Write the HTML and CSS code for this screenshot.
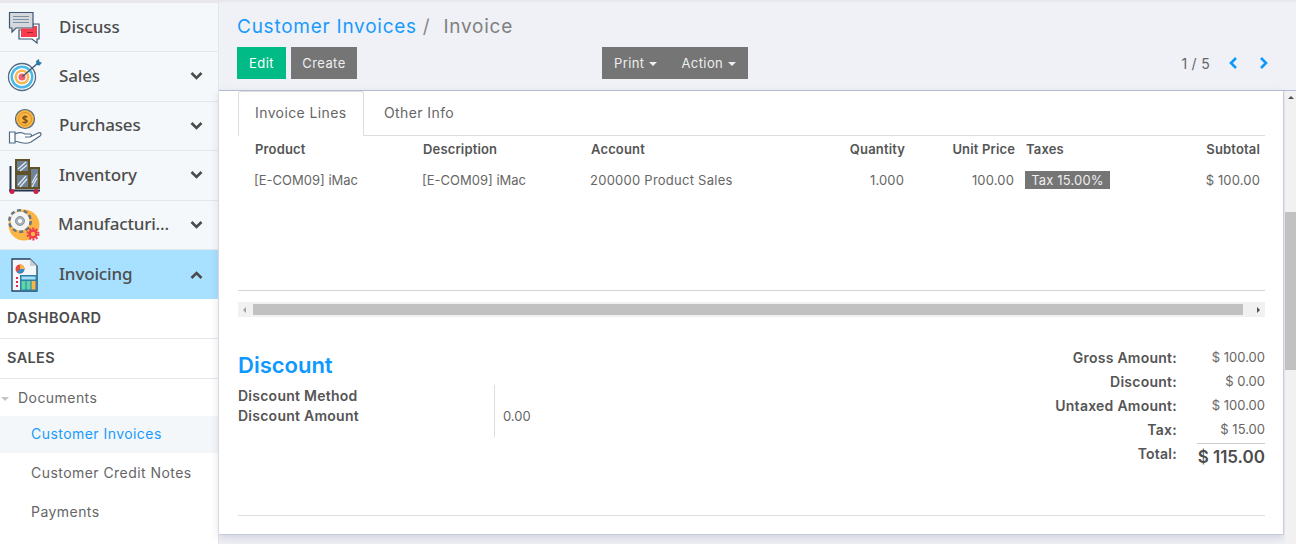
FILE: index.html
```html
<!DOCTYPE html>
<html lang="en">
<head>
    <meta charset="UTF-8">
    <title>Customer Invoices / Invoice</title>
    <link rel="stylesheet" href="styles.css">
</head>
<body>
<div class="app">

<!-- Left menu -->
<nav class="sidebar">
    <div class="app-item">
        <svg class="app-icon" viewBox="0 0 40 40">
            <path d="M27 17h6v15h-2v4l-5-4H13v-9h14z" fill="#fff" stroke="#3d5672" stroke-width="1.200"/>
            <path d="M3.500 5.500H27V21H10l-4 4v-4H3.500z" fill="#d5d9de" stroke="#3d5672" stroke-width="1.200"/>
            <path d="M7 9.500h16M7 12.500h16M7 15.500h16" stroke="#7d8fa3" stroke-width="1.200"/>
            <path d="M15 21.500h12.500V19H31v11H15z" fill="#fb3b4e"/>
            <path d="M21 25.500h6" stroke="#a3202c"/>
        </svg>
        <span class="app-name app-name-first">Discuss</span>
    </div>
    <div class="app-item">
        <svg class="app-icon" viewBox="0 0 40 40">
            <circle cx="16" cy="21" r="13.500" fill="#fff" stroke="#4f6a84" stroke-width="1.300"/>
            <circle cx="16" cy="21" r="11.500" fill="#4cb8e8"/>
            <circle cx="16" cy="21" r="9" fill="#fff"/>
            <circle cx="16" cy="21" r="7.500" fill="#f9b754"/>
            <circle cx="16" cy="21" r="5" fill="#fff"/>
            <circle cx="16" cy="21" r="3.500" fill="#ef5f6e"/>
            <path d="M16.500 20.500L32 7" stroke="#3d5672" stroke-width="1.300"/>
            <path d="M30 5l3-2 .5 3 2.500.5-2.500 3-3-.5z" fill="#2a7aa8"/>
        </svg>
        <span class="app-name">Sales</span>
        <svg class="chevron" viewBox="0 0 14 10"><path d="M2 2l5 5 5-5" fill="none" stroke="#4a4a4a" stroke-width="2.600"/></svg>
    </div>
    <div class="app-item">
        <svg class="app-icon" viewBox="0 0 40 40">
            <circle cx="19" cy="13" r="9.500" fill="#fbb544" stroke="#4f6a84" stroke-width="1.200"/>
            <circle cx="19" cy="13" r="6.500" fill="none" stroke="#c98a22" stroke-width=".8"/>
            <text class="coin" x="19" y="17" text-anchor="middle">$</text>
            <path d="M3.500 26h5.500v11h-5.500zM9 28c4-2 7-2 10 0h5c2 0 2 3 0 3h-5m5 0l8-4c3-1 4 1 2 3l-9 6c-4 2-10 1-14-.5H9" fill="#fff" stroke="#4f6a84" stroke-width="1.200"/>
        </svg>
        <span class="app-name">Purchases</span>
        <svg class="chevron" viewBox="0 0 14 10"><path d="M2 2l5 5 5-5" fill="none" stroke="#4a4a4a" stroke-width="2.600"/></svg>
    </div>
    <div class="app-item">
        <svg class="app-icon" viewBox="0 0 40 40">
            <path d="M4.500 11v25M3 35.500h31" stroke="#22344a" stroke-width="2"/>
            <rect x="10" y="5" width="13" height="12" fill="#6f8297" stroke="#5f5226" stroke-width="2"/>
            <rect x="10" y="19" width="13" height="14" fill="#6f8297" stroke="#5f5226" stroke-width="2"/>
            <rect x="24" y="13" width="9" height="20" fill="#6f8297" stroke="#5f5226" stroke-width="2"/>
            <path d="M12 14l8-7M14 16l7-6M12 30l8-9M14 32l7-8M26 28l5-9M26 32l5-9" stroke="#e3ebf2" stroke-width="1.300"/>
            <circle cx="6" cy="36.500" r="2.500" fill="#c91f4b"/>
            <circle cx="30" cy="36.500" r="2.500" fill="#c91f4b"/>
        </svg>
        <span class="app-name">Inventory</span>
        <svg class="chevron" viewBox="0 0 14 10"><path d="M2 2l5 5 5-5" fill="none" stroke="#4a4a4a" stroke-width="2.600"/></svg>
    </div>
    <div class="app-item">
        <svg class="app-icon" viewBox="0 0 40 40">
            <circle cx="18" cy="20" r="15.500" fill="#fbb544"/>
            <circle cx="14" cy="16" r="10.500" fill="none" stroke="#6b7680" stroke-width="3" stroke-dasharray="4 2.600"/>
            <circle cx="14" cy="16" r="9.500" fill="#f4f5f6"/>
            <circle cx="14" cy="16" r="4.500" fill="#aab1b8" stroke="#8b949c"/>
            <circle cx="14" cy="16" r="2" fill="#fff"/>
            <circle cx="27" cy="29" r="3.500" fill="none" stroke="#ee3b4c" stroke-width="2.500"/>
            <circle cx="27" cy="29" r="5.500" fill="none" stroke="#ee3b4c" stroke-width="2" stroke-dasharray="2 1.500"/>
        </svg>
        <span class="app-name app-name-tight">Manufacturi...</span>
        <svg class="chevron" viewBox="0 0 14 10"><path d="M2 2l5 5 5-5" fill="none" stroke="#4a4a4a" stroke-width="2.600"/></svg>
    </div>
    <div class="app-item app-item-open">
        <svg class="app-icon" viewBox="0 0 40 40">
            <path d="M6 4h18l7 7v25H6z" fill="#f4f7fa" stroke="#27405a" stroke-width="1.300"/>
            <path d="M24 4l7 7h-7z" fill="#c7ced6"/>
            <circle cx="14" cy="14" r="4.500" fill="#e8473f"/>
            <path d="M14 14v-4.500a4.500 4.500 0 0 1 4.500 4.500z" fill="#fbb544"/>
            <path d="M14 14h4.500a4.500 4.500 0 0 1-7.500 3.300z" fill="#2a8fd0"/>
            <path d="M10 23h2M10 27h2M10 31h2" stroke="#e2285a" stroke-width="2"/>
            <rect x="14" y="20" width="17" height="16" fill="#2d7ea8"/>
            <rect x="15.500" y="21.500" width="14" height="3" fill="#a6e0f7"/>
            <rect x="15.500" y="26" width="4" height="8.500" fill="#5ed6a8"/>
            <rect x="20.500" y="26" width="4" height="8.500" fill="#5ed6a8"/>
            <rect x="25.500" y="26" width="4" height="8.500" fill="#fbb544"/>
        </svg>
        <span class="app-name">Invoicing</span>
        <svg class="chevron" viewBox="0 0 14 10"><path d="M2 8l5-5 5 5" fill="none" stroke="#4a4a4a" stroke-width="2.600"/></svg>
    </div>

    <div class="menu-head">DASHBOARD</div>
    <div class="menu-head">SALES</div>
    <div class="menu-group"><span class="caret caret-light"></span>Documents</div>
    <div class="menu-link menu-link-active">Customer Invoices</div>
    <div class="menu-link">Customer Credit Notes</div>
    <div class="menu-link">Payments</div>
</nav>

<main class="content">

    <!-- Breadcrumb and buttons -->
    <header class="control-panel">
        <div class="breadcrumb"><span class="crumb-link">Customer Invoices</span><span class="crumb-sep">/</span><span class="crumb-current">Invoice</span></div>
        <div class="toolbar">
            <div class="btn-set">
                <button class="btn btn-primary">Edit</button>
                <button class="btn btn-create">Create</button>
            </div>
            <div class="btn-group">
                <button class="btn">Print<span class="caret"></span></button>
                <button class="btn">Action<span class="caret"></span></button>
            </div>
            <div class="pager">
                <span class="pager-count">1 / 5</span>
                <svg class="pager-arrow" viewBox="0 0 10 14"><path d="M8 2L3 7l5 5" fill="none" stroke="#0d99ff" stroke-width="2.600"/></svg>
                <svg class="pager-arrow" viewBox="0 0 10 14"><path d="M2 2l5 5-5 5" fill="none" stroke="#0d99ff" stroke-width="2.600"/></svg>
            </div>
        </div>
    </header>

    <div class="view">
        <section class="sheet">
            <div class="tabs">
                <div class="tab tab-active">Invoice Lines</div>
                <div class="tab">Other Info</div>
            </div>

            <div class="lines lines-head">
                <div>Product</div>
                <div>Description</div>
                <div>Account</div>
                <div class="num">Quantity</div>
                <div class="num">Unit Price</div>
                <div class="taxes">Taxes</div>
                <div class="num">Subtotal</div>
            </div>
            <div class="lines lines-row">
                <div class="product">[E-COM09] iMac</div>
                <div class="product">[E-COM09] iMac</div>
                <div class="account">200000 Product Sales</div>
                <div class="num">1.000</div>
                <div class="num">100.00</div>
                <div class="taxes"><span class="tag">Tax 15.00%</span></div>
                <div class="num">$ 100.00</div>
            </div>

            <div class="hscroll">
                <span class="arrow arrow-left"></span>
                <div class="hscroll-thumb"></div>
                <span class="arrow arrow-right"></span>
            </div>

            <div class="footer-row">
                <div class="discount">
                    <h2>Discount</h2>
                    <div class="discount-grid">
                        <div class="discount-labels">
                            <div>Discount Method</div>
                            <div>Discount Amount</div>
                        </div>
                        <div class="discount-values">
                            <div>&nbsp;</div>
                            <div>0.00</div>
                        </div>
                    </div>
                </div>
                <div class="totals">
                    <div class="total-label">Gross Amount:</div><div class="total-value">$ 100.00</div>
                    <div class="total-label">Discount:</div><div class="total-value">$ 0.00</div>
                    <div class="total-label">Untaxed Amount:</div><div class="total-value">$ 100.00</div>
                    <div class="total-label">Tax:</div><div class="total-value">$ 15.00</div>
                    <div class="total-label">Total:</div><div class="total-value grand">$ 115.00</div>
                </div>
            </div>
        </section>

        <div class="vscroll">
            <span class="arrow arrow-up"></span>
            <div class="vscroll-thumb"></div>
        </div>
    </div>
</main>

</div>
</body>
</html>
```

FILE: styles.css
```css
* {
    box-sizing: border-box;
}

body {
    margin: 0;
    font-family: Inter, sans-serif;
    font-size: 13px;
    color: #666;
}

.app {
    display: flex;
    height: 544px;
    overflow: hidden;
}

/* sidebar */
.sidebar {
    width: 219px;
    flex: none;
    background: #fff;
    border-right: 1px solid #e6e6ea;
    padding-top: 2.500px;
    box-shadow: inset 0 3px 0 #e8e8ec;
}

.app-item {
    height: 49.500px;
    display: flex;
    align-items: center;
    padding-left: 6px;
    padding-right: 14px;
    background: #f5f8fa;
    border-bottom: 1px solid #e3e6ea;
}

.app-item-open {
    background: #a8e0ff;
    border-bottom: 0;
    height: 49px;
}

.app-icon {
    width: 40px;
    height: 40px;
    flex: none;
}

.coin {
    font-family: "Open Sans", sans-serif;
    font-size: 11px;
    font-weight: 700;
    fill: #7a4d10;
}

.app-name {
    margin-left: 13px;
    margin-bottom: 2px;
    font-family: "Noto Sans", sans-serif;
    font-size: 17px;
    font-weight: 500;
    letter-spacing: -.15px;
    color: #4d4d4d;
    flex: 1;
    white-space: nowrap;
}

.app-name-first {
    margin-bottom: 0;
    letter-spacing: 0;
}

.app-name-tight {
    margin-left: 12px;
    letter-spacing: -.2px;
}

.chevron {
    width: 15px;
    height: 10px;
    flex: none;
}

.menu-head {
    height: 40px;
    padding-left: 7px;
    line-height: 38px;
    font-size: 14.500px;
    letter-spacing: .35px;
    font-weight: 600;
    color: #4c4c4c;
    border-bottom: 1px solid #e6e6ea;
}

.menu-group {
    height: 37px;
    line-height: 37px;
    padding-left: 1px;
    font-size: 14px;
    letter-spacing: .45px;
    color: #666;
}

.caret-light {
    border-top-color: #c4c4c4 !important;
    margin: 0 9px 0 0 !important;
}

.menu-link {
    height: 39px;
    line-height: 40px;
    padding-left: 31px;
    font-size: 14px;
    letter-spacing: .45px;
    color: #666;
}

.menu-link-active {
    height: 37px;
    line-height: 36px;
    color: #1a9bfc;
    background: #f3f7f9;
}

/* main area */
.content {
    flex: 1;
    display: flex;
    flex-direction: column;
    background: #eff1f6;
    min-width: 0;
}

.control-panel {
    height: 91px;
    flex: none;
    padding: 14px 18px 0 18px;
    border-bottom: 1px solid #b3bfd2;
    box-shadow: inset 0 2px 0 #e8e8ec;
}

.breadcrumb {
    height: 33px;
    font-size: 19px;
    letter-spacing: .75px;
    line-height: 26px;
}

.crumb-link {
    color: #1a9bfc;
}

.crumb-sep {
    color: #888;
    margin: 0 13px 0 6px;
}

.crumb-current {
    color: #808080;
}

.toolbar {
    display: flex;
    align-items: center;
}

.btn-set {
    display: flex;
    gap: 5px;
    width: 365px;
}

.btn-group {
    display: flex;
}

.btn {
    height: 32px;
    border: 0;
    padding: 0 12px;
    font-family: Inter, sans-serif;
    font-size: 13px;
    letter-spacing: .4px;
    color: #eee;
    background: #757575;
}

.btn-primary {
    background: #00bb85;
    color: #fff;
    width: 49px;
    padding: 0;
}

.btn-create {
    width: 66px;
    padding: 0;
}

.caret {
    display: inline-block;
    border-left: 4px solid transparent;
    border-right: 4px solid transparent;
    border-top: 4px solid #eee;
    margin-left: 5px;
    vertical-align: middle;
}

.pager {
    margin-left: auto;
    display: flex;
    align-items: center;
    padding-right: 9px;
}

.pager-count {
    color: #666;
    font-size: 14px;
    letter-spacing: .3px;
    margin-right: 18px;
}

.pager-arrow {
    width: 10px;
    height: 14px;
    margin-right: 21px;
}

.pager-arrow:last-child {
    margin-right: 0;
}

.view {
    flex: 1;
    display: flex;
    min-height: 0;
    align-items: flex-start;
}

.sheet {
    width: 1065px;
    height: 444px;
    flex: none;
    background: #fff;
    border-right: 1px solid #c8ccd8;
    border-bottom: 1px solid #c8ccd8;
    box-shadow: 0 3px 8px rgba(120, 125, 150, .25);
    padding: 0 18px 0 19px;
}

.tabs {
    display: flex;
    height: 45px;
    border-bottom: 1px solid #ddd;
}

.tab {
    height: 45px;
    padding: 0 20px;
    line-height: 44px;
    font-size: 14px;
    letter-spacing: .4px;
    color: #666;
}

.tab-active {
    width: 126px;
    padding: 0 16px;
    line-height: 42px;
    background: #fff;
    border: 1px solid #ddd;
    border-bottom-color: #fff;
    border-radius: 3px 3px 0 0;
}

.lines {
    display: grid;
    grid-template-columns: 168px 168px 200px 114px 110px 1fr 80px;
    padding: 0 5px 0 17px;
    letter-spacing: .15px;
}

.lines-head {
    height: 28px;
    line-height: 27px;
    font-weight: 600;
    color: #555;
}

.lines-row {
    height: 127px;
    padding-top: 7px;
    padding-left: 16px;
    line-height: 18px;
    border-bottom: 1px solid #d4d4d8;
}

.product {
    letter-spacing: 0;
}

.account {
    letter-spacing: .25px;
}

.num {
    text-align: right;
}

.taxes {
    padding-left: 11px;
}

.tag {
    display: inline-block;
    height: 18px;
    width: 85px;
    background: #757575;
    color: #eee;
    text-align: center;
    line-height: 18px;
    white-space: nowrap;
}

.hscroll {
    margin-top: 11px;
    height: 15px;
    background: #f1f1f1;
    display: flex;
    align-items: center;
    justify-content: space-between;
    padding: 0 5px;
}

.hscroll-thumb {
    width: 990px;
    height: 11px;
    background: #c1c1c1;
    margin-left: 7px;
    margin-right: auto;
}

.arrow {
    display: block;
    width: 0;
    height: 0;
    flex: none;
    border: 3.500px solid transparent;
}

.arrow-left {
    border-left: 0;
    border-right-color: #a3a3a3;
}

.arrow-right {
    border-right: 0;
    border-left-color: #505050;
}

.arrow-up {
    border-top: 0;
    border-bottom-color: #505050;
    margin: 5px auto 0;
}

.footer-row {
    display: flex;
    justify-content: space-between;
    height: 199px;
    padding-top: 29px;
    border-bottom: 1px solid #ddd;
}

.discount h2 {
    margin: 3px 0 0;
    font-size: 22px;
    line-height: 32px;
    font-weight: 600;
    color: #0d99ff;
}

.discount-grid {
    display: flex;
    margin-top: 4px;
}

.discount-labels {
    width: 257px;
    font-size: 14px;
    letter-spacing: .25px;
    font-weight: 600;
    color: #555;
    line-height: 20px;
    padding-top: 1px;
    height: 52px;
    border-right: 1px solid #ddd;
}

.discount-values {
    padding-left: 8px;
    line-height: 20px;
    padding-top: 1px;
}

.totals {
    display: grid;
    grid-template-columns: auto 88px;
    grid-auto-rows: 24px;
    justify-items: end;
    align-items: center;
}

.total-label {
    font-size: 14px;
    letter-spacing: .25px;
    font-weight: 600;
    color: #555;
    margin-bottom: 2px;
}

.total-value {
    color: #666;
    position: relative;
    top: -1px;
}

.grand {
    width: 68px;
    height: 28px;
    text-align: right;
    border-top: 1px solid #ccc;
    align-self: start;
    margin-top: 1px;
    top: 0;
    font-size: 17px;
    font-weight: 600;
    line-height: 26px;
    color: #4c4c4c;
    white-space: nowrap;
}

/* right page scrollbar */
.vscroll {
    flex: 1;
    height: 100%;
    background: #f1f1f1;
    margin-left: 1px;
}

.vscroll-thumb {
    height: 158px;
    margin: 113px 0 0;
    background: #c1c1c1;
}
```
